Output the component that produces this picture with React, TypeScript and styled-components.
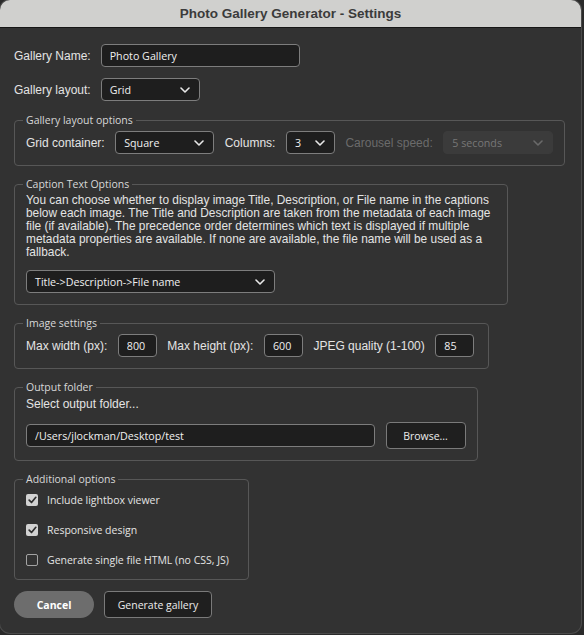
import React from "react";
import styled, { createGlobalStyle } from "styled-components";

const GlobalStyle = createGlobalStyle`
  html, body { margin: 0; padding: 0; background: #2a2a2a; }
  * { box-sizing: border-box; }
`;

const SANS = "'Liberation Sans', Arial, Helvetica, sans-serif";
const CLEAN = "'Open Sans', 'Noto Sans', sans-serif";

const Page = styled.div`
  width: 584px;
  height: 635px;
  background: #2a2a2a;
  overflow: hidden;
`;

const Window = styled.div`
  width: 581px;
  height: 633px;
  border-radius: 10px;
  overflow: hidden;
  background: #323232;
  box-shadow: 0 0 0 1px #4a4a4a;
  display: flex;
  flex-direction: column;
`;

const TitleBar = styled.div`
  height: 28px;
  flex: none;
  background: #d0d0ce;
  border-bottom: 1px solid #161616;
  display: flex;
  align-items: center;
  justify-content: center;
  font-family: ${SANS};
  font-weight: bold;
  font-size: 13.5px;
  color: #3b3b3b;
  padding-bottom: 1px;
`;

const Content = styled.div`
  padding: 16px 14px 0 14px;
  display: flex;
  flex-direction: column;
  align-items: flex-start;
  gap: 11px;
`;

const FieldRow = styled.div<{ $gap?: number }>`
  display: flex;
  align-items: center;
  gap: ${(p) => p.$gap ?? 10}px;
`;

const Label = styled.span<{ $disabled?: boolean }>`
  font-family: ${SANS};
  font-size: 12px;
  color: ${(p) => (p.$disabled ? "#6b6b6b" : "#e4e4e4")};
  white-space: nowrap;
`;

const TextInput = styled.input<{ $w: number }>`
  width: ${(p) => p.$w}px;
  height: 23px;
  background: #1e1e1e;
  border: 1px solid #7d7d7d;
  border-radius: 4px;
  color: #f0f0f0;
  font-family: ${CLEAN};
  font-size: 10.7px;
  padding: 1px 0 0 8px;
  outline: none;
  margin: 0;
`;

const SelectBox = styled.div<{ $w: number; $disabled?: boolean }>`
  width: ${(p) => p.$w}px;
  height: 23px;
  background: ${(p) => (p.$disabled ? "#3b3b3b" : "#1e1e1e")};
  border: 1px solid ${(p) => (p.$disabled ? "#3b3b3b" : "#7d7d7d")};
  border-radius: 4px;
  color: ${(p) => (p.$disabled ? "#777777" : "#f0f0f0")};
  font-family: ${CLEAN};
  font-size: 10.7px;
  display: flex;
  align-items: center;
  justify-content: space-between;
  padding: 1px 9px 0 8px;
  svg { flex: none; }
`;

const Fieldset = styled.fieldset<{ $pt: number; $pb: number; $pr?: number; $mt?: number }>`
  margin: ${(p) => p.$mt ?? 0}px 0 0 0;
  border: 1px solid #575757;
  border-radius: 4px;
  padding: ${(p) => p.$pt}px ${(p) => p.$pr ?? 11}px ${(p) => p.$pb}px 11px;
  min-width: 0;
`;

const Legend = styled.legend`
  padding: 0 3px;
  margin-left: -3px;
  font-family: ${CLEAN};
  font-size: 10.5px;
  line-height: 14px;
  color: #d8d8d8;
`;

const Paragraph = styled.p`
  margin: 0;
  font-family: ${SANS};
  font-size: 11.9px;
  line-height: 13px;
  color: #e4e4e4;
  white-space: nowrap;
`;

const Stack = styled.div<{ $gap: number }>`
  display: flex;
  flex-direction: column;
  align-items: flex-start;
  gap: ${(p) => p.$gap}px;
`;

const Button = styled.button<{ $w: number }>`
  width: ${(p) => p.$w}px;
  height: 27px;
  background: #1f1f1f;
  border: 1px solid #7a7a7a;
  border-radius: 4px;
  color: #ececec;
  font-family: ${CLEAN};
  font-size: 10.5px;
  padding: 0;
  margin: 0;
  cursor: default;
`;

const PillButton = styled.button`
  width: 80px;
  height: 27px;
  background: #6d6d6d;
  border: none;
  border-radius: 14px;
  color: #ffffff;
  font-family: ${CLEAN};
  font-weight: 700;
  font-size: 10.5px;
  padding: 0;
  margin: 0;
`;

const CheckRow = styled.label`
  display: flex;
  align-items: center;
  gap: 9px;
  height: 18px;
  font-family: ${CLEAN};
  font-size: 10.5px;
  color: #e4e4e4;
  white-space: nowrap;
`;

const Box = styled.span<{ $checked: boolean }>`
  width: 12px;
  height: 12px;
  border-radius: 2px;
  flex: none;
  background: ${(p) => (p.$checked ? "#d2d2d2" : "transparent")};
  border: ${(p) => (p.$checked ? "none" : "1.5px solid #a3a3a3")};
  display: flex;
  align-items: center;
  justify-content: center;
`;

const ButtonBar = styled.div`
  display: flex;
  gap: 10px;
  align-items: center;
`;

const Chevron = ({ color }: { color: string }) => (
  <svg width="10" height="6" viewBox="0 0 10 6">
    <path d="M1 1 L5 5 L9 1" fill="none" stroke={color} strokeWidth="1.6" strokeLinecap="round" strokeLinejoin="round" />
  </svg>
);

const Select = ({ w, value, disabled }: { w: number; value: string; disabled?: boolean }) => (
  <SelectBox $w={w} $disabled={disabled}>
    <span>{value}</span>
    <Chevron color={disabled ? "#6a6a6a" : "#e8e8e8"} />
  </SelectBox>
);

const Check = ({ checked, label }: { checked: boolean; label: string }) => (
  <CheckRow>
    <Box $checked={checked}>
      {checked && (
        <svg width="9" height="8" viewBox="0 0 9 8">
          <path d="M1.2 4.2 L3.5 6.5 L7.8 1.3" fill="none" stroke="#2e2e2e" strokeWidth="1.7" strokeLinecap="round" strokeLinejoin="round" />
        </svg>
      )}
    </Box>
    {label}
  </CheckRow>
);

export default function App() {
  return (
    <Page>
      <GlobalStyle />
      <Window>
        <TitleBar>Photo Gallery Generator - Settings</TitleBar>
        <Content>
          <FieldRow>
            <Label>Gallery Name:</Label>
            <TextInput $w={199} readOnly value="Photo Gallery" />
          </FieldRow>
          <FieldRow>
            <Label>Gallery layout:</Label>
            <Select w={99} value="Grid" />
          </FieldRow>

          <Fieldset $pt={4} $pb={11} $mt={1}>
            <Legend>Gallery layout options</Legend>
            <FieldRow $gap={10.5}>
              <Label>Grid container:</Label>
              <Select w={99} value="Square" />
              <Label>Columns:</Label>
              <Select w={49} value="3" />
              <Label $disabled>Carousel speed:</Label>
              <Select w={110} value="5 seconds" disabled />
            </FieldRow>
          </Fieldset>

          <Fieldset $pt={3} $pb={11} $pr={17}>
            <Legend>Caption Text Options</Legend>
            <Stack $gap={11}>
              <Paragraph>
                You can choose whether to display image Title, Description, or File name in the captions
                <br />
                below each image. The Title and Description are taken from the metadata of each image
                <br />
                file (if available). The precedence order determines which text is displayed if multiple
                <br />
                metadata properties are available. If none are available, the file name will be used as a
                <br />
                fallback.
              </Paragraph>
              <Select w={249} value="Title->Description->File name" />
            </Stack>
          </Fieldset>

          <Fieldset $pt={4} $pb={11} $pr={14}>
            <Legend>Image settings</Legend>
            <FieldRow $gap={10.5}>
              <Label>Max width (px):</Label>
              <TextInput $w={39} readOnly value="800" />
              <Label>Max height (px):</Label>
              <TextInput $w={39} readOnly value="600" />
              <Label>JPEG quality (1-100)</Label>
              <TextInput $w={39} readOnly value="85" />
            </FieldRow>
          </Fieldset>

          <Fieldset $pt={3} $pb={11}>
            <Legend>Output folder</Legend>
            <Stack $gap={11}>
              <Label>Select output folder...</Label>
              <FieldRow $gap={10.5}>
                <TextInput $w={349} readOnly value="/Users/jlockman/Desktop/test" />
                <Button $w={80}>Browse...</Button>
              </FieldRow>
            </Stack>
          </Fieldset>

          <Fieldset $pt={5} $pb={10} $pr={19}>
            <Legend>Additional options</Legend>
            <Stack $gap={12}>
              <Check checked label="Include lightbox viewer" />
              <Check checked label="Responsive design" />
              <Check checked={false} label="Generate single file HTML (no CSS, JS)" />
            </Stack>
          </Fieldset>

          <ButtonBar>
            <PillButton>Cancel</PillButton>
            <Button $w={108}>Generate gallery</Button>
          </ButtonBar>
        </Content>
      </Window>
    </Page>
  );
}
